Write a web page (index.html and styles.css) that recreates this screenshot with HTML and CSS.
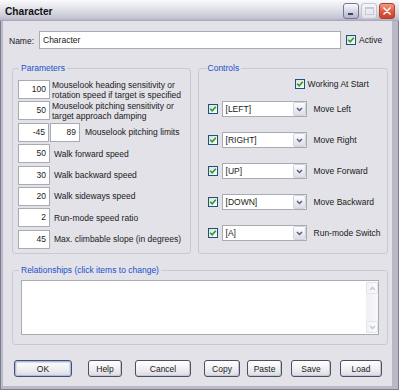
FILE: index.html
```html
<!DOCTYPE html>
<html>
<head>
<meta charset="utf-8">
<link rel="stylesheet" href="styles.css">
</head>
<body>
<div class="window">
  <div class="titlebar">
    <span class="title">Character</span>
    <div class="tb-buttons">
      <span class="tb-btn tb-min"><span class="min-bar"></span></span>
      <span class="tb-btn tb-max"><span class="max-box"></span></span>
      <span class="tb-btn tb-close">
        <svg width="16" height="16" viewBox="0 0 16 16"><path d="M4.5 4.5 L11.5 11.5 M11.5 4.5 L4.5 11.5" stroke="#fff" stroke-width="1.8" stroke-linecap="round"/></svg>
      </span>
    </div>
  </div>
  <div class="body">
    <div class="name-row">
      <span class="name-label">Name:</span>
      <div class="textbox name-input">Character</div>
      <span class="check"><svg width="8" height="8" viewBox="0 0 8 8"><path d="M1.2 3.8 L3.2 5.8 L6.8 1.8" fill="none" stroke="#21a121" stroke-width="1.6"/></svg></span>
      <span class="check-label">Active</span>
    </div>

    <div class="groups">
      <fieldset class="group params">
        <legend>Parameters</legend>
        <div class="prows">
          <div class="prow"><div class="num">100</div><div class="ptext ptext-tight">Mouselook heading sensitivity or<br>rotation speed if target is specified</div></div>
          <div class="prow"><div class="num">50</div><div class="ptext ptext-tight">Mouselook pitching sensitivity or<br>target approach damping</div></div>
          <div class="prow"><div class="num num-a">-45</div><div class="num num-b">89</div><div class="ptext ptext-wide">Mouselook pitching limits</div></div>
          <div class="prow"><div class="num">50</div><div class="ptext">Walk forward speed</div></div>
          <div class="prow"><div class="num">30</div><div class="ptext">Walk backward speed</div></div>
          <div class="prow"><div class="num">20</div><div class="ptext">Walk sideways speed</div></div>
          <div class="prow"><div class="num">2</div><div class="ptext">Run-mode speed ratio</div></div>
          <div class="prow"><div class="num">45</div><div class="ptext">Max. climbable slope (in degrees)</div></div>
        </div>
      </fieldset>

      <fieldset class="group controls">
        <legend>Controls</legend>
        <div class="working">
          <span class="check"><svg width="8" height="8" viewBox="0 0 8 8"><path d="M1.2 3.8 L3.2 5.8 L6.8 1.8" fill="none" stroke="#21a121" stroke-width="1.6"/></svg></span>
          <span class="check-label">Working At Start</span>
        </div>
        <div class="crows">
          <div class="crow">
            <span class="check"><svg width="8" height="8" viewBox="0 0 8 8"><path d="M1.2 3.8 L3.2 5.8 L6.8 1.8" fill="none" stroke="#21a121" stroke-width="1.6"/></svg></span>
            <div class="combo"><span class="combo-text">[LEFT]</span><span class="combo-btn"><svg width="7" height="5" viewBox="0 0 7 5"><path d="M1 1 L3.5 3.5 L6 1" fill="none" stroke="#4d6185" stroke-width="1.5"/></svg></span></div>
            <span class="clabel">Move Left</span>
          </div>
          <div class="crow">
            <span class="check"><svg width="8" height="8" viewBox="0 0 8 8"><path d="M1.2 3.8 L3.2 5.8 L6.8 1.8" fill="none" stroke="#21a121" stroke-width="1.6"/></svg></span>
            <div class="combo"><span class="combo-text">[RIGHT]</span><span class="combo-btn"><svg width="7" height="5" viewBox="0 0 7 5"><path d="M1 1 L3.5 3.5 L6 1" fill="none" stroke="#4d6185" stroke-width="1.5"/></svg></span></div>
            <span class="clabel">Move Right</span>
          </div>
          <div class="crow">
            <span class="check"><svg width="8" height="8" viewBox="0 0 8 8"><path d="M1.2 3.8 L3.2 5.8 L6.8 1.8" fill="none" stroke="#21a121" stroke-width="1.6"/></svg></span>
            <div class="combo"><span class="combo-text">[UP]</span><span class="combo-btn"><svg width="7" height="5" viewBox="0 0 7 5"><path d="M1 1 L3.5 3.5 L6 1" fill="none" stroke="#4d6185" stroke-width="1.5"/></svg></span></div>
            <span class="clabel">Move Forward</span>
          </div>
          <div class="crow">
            <span class="check"><svg width="8" height="8" viewBox="0 0 8 8"><path d="M1.2 3.8 L3.2 5.8 L6.8 1.8" fill="none" stroke="#21a121" stroke-width="1.6"/></svg></span>
            <div class="combo"><span class="combo-text">[DOWN]</span><span class="combo-btn"><svg width="7" height="5" viewBox="0 0 7 5"><path d="M1 1 L3.5 3.5 L6 1" fill="none" stroke="#4d6185" stroke-width="1.5"/></svg></span></div>
            <span class="clabel">Move Backward</span>
          </div>
          <div class="crow">
            <span class="check"><svg width="8" height="8" viewBox="0 0 8 8"><path d="M1.2 3.8 L3.2 5.8 L6.8 1.8" fill="none" stroke="#21a121" stroke-width="1.6"/></svg></span>
            <div class="combo"><span class="combo-text">[A]</span><span class="combo-btn"><svg width="7" height="5" viewBox="0 0 7 5"><path d="M1 1 L3.5 3.5 L6 1" fill="none" stroke="#4d6185" stroke-width="1.5"/></svg></span></div>
            <span class="clabel">Run-mode Switch</span>
          </div>
        </div>
      </fieldset>
    </div>

    <fieldset class="group relationships">
      <legend>Relationships (click items to change)</legend>
      <div class="listbox">
        <div class="scrollbar">
          <span class="sb-btn"><svg width="7" height="5" viewBox="0 0 7 5"><path d="M1 4 L3.5 1.5 L6 4" fill="none" stroke="#c4c6cf" stroke-width="1.4"/></svg></span>
          <span class="sb-btn"><svg width="7" height="5" viewBox="0 0 7 5"><path d="M1 1 L3.5 3.5 L6 1" fill="none" stroke="#c4c6cf" stroke-width="1.4"/></svg></span>
        </div>
      </div>
    </fieldset>

    <div class="buttons">
      <span class="btn btn-default btn-ok">OK</span>
      <span class="btn btn-help">Help</span>
      <span class="btn btn-cancel">Cancel</span>
      <span class="btn btn-copy">Copy</span>
      <span class="btn btn-paste">Paste</span>
      <span class="btn btn-save">Save</span>
      <span class="btn btn-load">Load</span>
    </div>
  </div>
</div>
</body>
</html>
```

FILE: styles.css
```css
* { box-sizing: border-box; }
html, body { margin: 0; padding: 0; }
body {
  width: 399px;
  height: 390px;
  overflow: hidden;
  font-family: "Liberation Sans", Arial, sans-serif;
  font-size: 8.5px;
  color: #1a1a1a;
  background: #fff;
}
.window {
  width: 399px;
  height: 390px;
  display: flex;
  flex-direction: column;
  background: #b9b9c8;
  border: 1px solid #7c7c90;
  border-top: none;
}
.titlebar {
  height: 21px;
  margin: 0 -1px;
  display: flex;
  align-items: center;
  justify-content: space-between;
  padding: 0 4px 0 5px;
  background: linear-gradient(#fbfbfd 0%, #ececf2 25%, #d9d9e3 60%, #c4c4d3 90%, #b4b4c6 100%);
  border-bottom: 1px solid #a9a9bb;
}
.title {
  font-weight: bold;
  font-size: 10.2px;
  color: #111;
  padding-top: 2px;
}
.tb-buttons {
  display: flex;
  gap: 2px;
  align-items: center;
  padding-top: 1px;
}
.tb-btn {
  width: 16px;
  height: 16px;
  border-radius: 3px;
  display: flex;
  align-items: center;
  justify-content: center;
  position: relative;
}
.tb-min {
  border: 1px solid #757694;
  background: linear-gradient(#fafafd, #cfd0e0 60%, #b1b3cc);
}
.min-bar {
  position: absolute;
  left: 4px;
  top: 9px;
  width: 5px;
  height: 2px;
  background: #3e4160;
}
.tb-max {
  border: 1px solid #c5c6d3;
  background: linear-gradient(#f4f4f8, #e2e2ea);
}
.max-box {
  width: 9px;
  height: 8px;
  border: 1px solid #c8c9d5;
  border-top-width: 2px;
}
.tb-close {
  border: 1px solid #b2412c;
  background: linear-gradient(#f19b86, #e0573d 55%, #c8412b);
}
.body {
  flex: 1;
  margin: 0 6px 3px 2px;
  background: #e2e2e8;
  padding: 10px 4px 0 9px;
  display: flex;
  flex-direction: column;
}
.name-row {
  display: flex;
  align-items: center;
  height: 18px;
  margin-left: -3px;
}
.name-label {
  width: 30px;
  padding-top: 1px;
}
.textbox {
  background: #fff;
  border: 1px solid #a5acb2;
}
.name-input {
  width: 302px;
  height: 18px;
  padding-left: 3px;
  line-height: 16px;
}
.check {
  width: 10px;
  height: 10px;
  border: 1px solid #1c5180;
  background: linear-gradient(135deg, #dcdcd7, #fdfdfd);
  display: inline-flex;
  align-items: center;
  justify-content: center;
  flex: none;
}
.name-row .check { margin-left: 5px; }
.check-label { margin-left: 3px; }

.group {
  margin: 0;
  border: 1px solid #c9c9d3;
  border-radius: 3px;
  min-width: 0;
}
.group legend {
  color: #2150c8;
  line-height: 11px;
  padding: 0 2px;
}
.groups {
  display: flex;
  gap: 7px;
  height: 191px;
  margin-top: 13.5px;
}
.params {
  width: 179px;
  padding: 0 4px 0 5px;
}
.params legend { margin-left: 1px; }
.prows {
  display: flex;
  flex-direction: column;
  gap: 2.4px;
  margin-top: 6.5px;
}
.prow {
  display: flex;
  align-items: center;
  height: 19px;
}
.num {
  width: 32px;
  height: 19px;
  background: #fff;
  border: 1px solid #a5acb2;
  text-align: right;
  padding-right: 3px;
  line-height: 17px;
  flex: none;
}
.num-a { width: 31px; }
.num-b { width: 30px; margin-left: 1px; }
.ptext {
  margin-left: 4px;
  line-height: 10px;
  white-space: nowrap;
}
.ptext-tight { margin-left: 2px; }
.ptext-wide { margin-left: 5px; }

.controls {
  width: 191px;
  padding: 0 4px 0 9px;
}
.controls legend { margin-left: -2px; }
.working {
  display: flex;
  align-items: center;
  height: 10px;
  margin-top: 5.5px;
  margin-left: 87px;
}
.crows {
  display: flex;
  flex-direction: column;
  gap: 15px;
  margin-top: 12px;
}
.crow {
  display: flex;
  align-items: center;
  height: 16px;
}
.combo {
  width: 85px;
  height: 16px;
  margin-left: 4px;
  background: #fff;
  border: 1px solid #a5acb2;
  display: flex;
  align-items: stretch;
  justify-content: space-between;
}
.combo-text {
  padding-left: 3px;
  line-height: 14px;
}
.combo-btn {
  width: 13px;
  margin: 0;
  border: 1px solid #d1d3dc;
  border-radius: 2px;
  background: linear-gradient(#fdfdfe, #dcdde6);
  display: flex;
  align-items: center;
  justify-content: center;
}
.clabel { margin-left: 7px; }

.relationships {
  width: 376px;
  margin-top: 11px;
  padding: 0 8px 8.5px 8px;
}
.relationships legend { margin-left: -2px; }
.listbox {
  margin-top: 4.5px;
  height: 55px;
  background: #fff;
  border: 1px solid #a5acb2;
  display: flex;
  justify-content: flex-end;
  padding: 1px 0 1px 0;
}
.scrollbar {
  width: 12px;
  background: linear-gradient(90deg, #eeeef4, #f9f9fc);
  display: flex;
  flex-direction: column;
  justify-content: space-between;
}
.sb-btn {
  width: 12px;
  height: 12px;
  border: 1px solid #e2e3ea;
  border-radius: 2px;
  background: linear-gradient(90deg, #f3f3f7, #fbfbfd);
  display: flex;
  align-items: center;
  justify-content: center;
}

.buttons {
  display: flex;
  margin-top: 15.5px;
  margin-left: 2px;
}
.btn {
  height: 17px;
  border: 1px solid #4c4e63;
  border-radius: 3px;
  background: linear-gradient(#ffffff, #f1f1f4 50%, #dadae2);
  display: flex;
  align-items: center;
  justify-content: center;
  box-shadow: inset -1px -1px 0 #c6c7d3;
}
.btn-default {
  box-shadow: inset 0 0 0 1px #a8bde0, inset 0 0 0 2px #d4def0;
}
.btn-ok { width: 58px; }
.btn-help { width: 34px; margin-left: 16px; }
.btn-cancel { width: 56px; margin-left: 13px; }
.btn-copy { width: 36px; margin-left: 13px; }
.btn-paste { width: 35px; margin-left: 7px; }
.btn-save { width: 40px; margin-left: 9px; }
.btn-load { width: 42px; margin-left: 9px; }
```
